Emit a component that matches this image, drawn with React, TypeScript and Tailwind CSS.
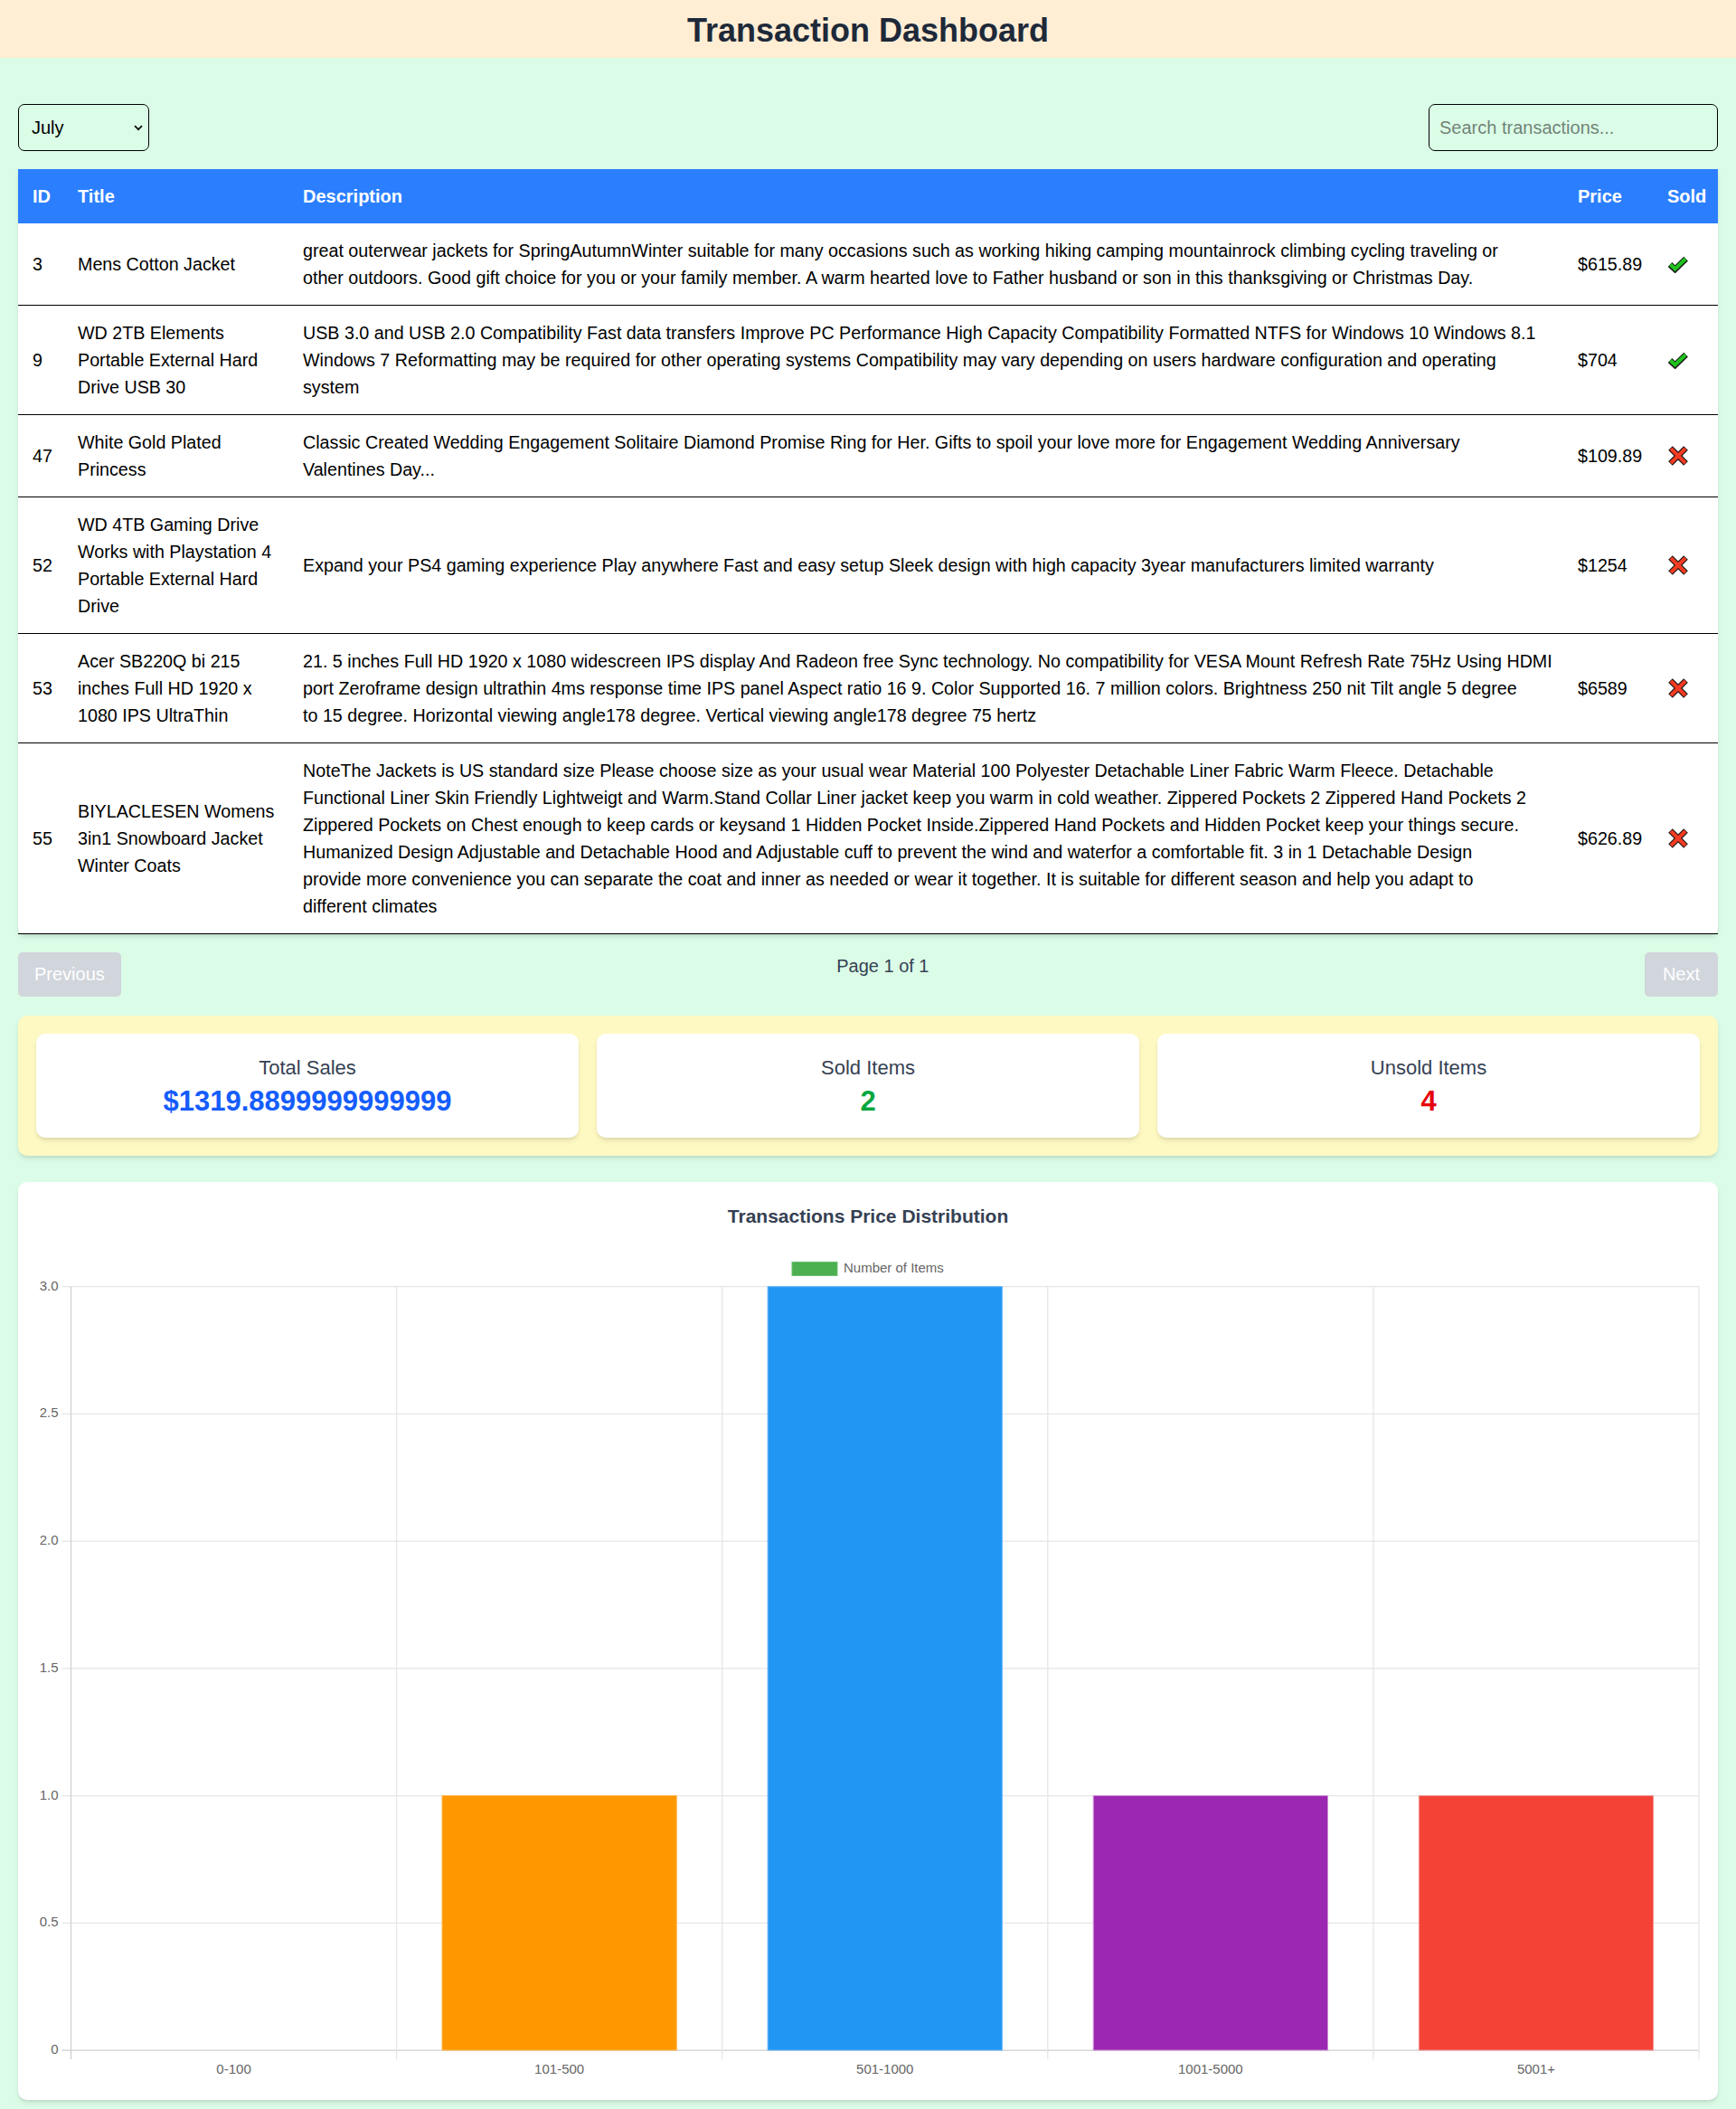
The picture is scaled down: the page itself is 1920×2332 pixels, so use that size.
import React from "react";

type Row = { id: number; title: string; lines: string[]; price: string; sold: boolean };

const rows: Row[] = [
  {
    id: 3,
    title: "Mens Cotton Jacket",
    lines: [
      "great outerwear jackets for SpringAutumnWinter suitable for many occasions such as working hiking camping mountainrock climbing cycling traveling or",
      "other outdoors. Good gift choice for you or your family member. A warm hearted love to Father husband or son in this thanksgiving or Christmas Day.",
    ],
    price: "$615.89",
    sold: true,
  },
  {
    id: 9,
    title: "WD 2TB Elements Portable External Hard Drive USB 30",
    lines: [
      "USB 3.0 and USB 2.0 Compatibility Fast data transfers Improve PC Performance High Capacity Compatibility Formatted NTFS for Windows 10 Windows 8.1",
      "Windows 7 Reformatting may be required for other operating systems Compatibility may vary depending on users hardware configuration and operating",
      "system",
    ],
    price: "$704",
    sold: true,
  },
  {
    id: 47,
    title: "White Gold Plated Princess",
    lines: [
      "Classic Created Wedding Engagement Solitaire Diamond Promise Ring for Her. Gifts to spoil your love more for Engagement Wedding Anniversary",
      "Valentines Day...",
    ],
    price: "$109.89",
    sold: false,
  },
  {
    id: 52,
    title: "WD 4TB Gaming Drive Works with Playstation 4 Portable External Hard Drive",
    lines: [
      "Expand your PS4 gaming experience Play anywhere Fast and easy setup Sleek design with high capacity 3year manufacturers limited warranty",
    ],
    price: "$1254",
    sold: false,
  },
  {
    id: 53,
    title: "Acer SB220Q bi 215 inches Full HD 1920 x 1080 IPS UltraThin",
    lines: [
      "21. 5 inches Full HD 1920 x 1080 widescreen IPS display And Radeon free Sync technology. No compatibility for VESA Mount Refresh Rate 75Hz Using HDMI",
      "port Zeroframe design ultrathin 4ms response time IPS panel Aspect ratio 16 9. Color Supported 16. 7 million colors. Brightness 250 nit Tilt angle 5 degree",
      "to 15 degree. Horizontal viewing angle178 degree. Vertical viewing angle178 degree 75 hertz",
    ],
    price: "$6589",
    sold: false,
  },
  {
    id: 55,
    title: "BIYLACLESEN Womens 3in1 Snowboard Jacket Winter Coats",
    lines: [
      "NoteThe Jackets is US standard size Please choose size as your usual wear Material 100 Polyester Detachable Liner Fabric Warm Fleece. Detachable",
      "Functional Liner Skin Friendly Lightweigt and Warm.Stand Collar Liner jacket keep you warm in cold weather. Zippered Pockets 2 Zippered Hand Pockets 2",
      "Zippered Pockets on Chest enough to keep cards or keysand 1 Hidden Pocket Inside.Zippered Hand Pockets and Hidden Pocket keep your things secure.",
      "Humanized Design Adjustable and Detachable Hood and Adjustable cuff to prevent the wind and waterfor a comfortable fit. 3 in 1 Detachable Design",
      "provide more convenience you can separate the coat and inner as needed or wear it together. It is suitable for different season and help you adapt to",
      "different climates",
    ],
    price: "$626.89",
    sold: false,
  },
];

function CheckIcon() {
  return (
    <svg width="24" height="20" viewBox="0 0 24 20" className="block">
      <polyline
        points="3,10.5 8.6,15.8 20.6,4.2"
        fill="none"
        stroke="#151515"
        strokeWidth="6.6"
        strokeLinecap="butt"
        strokeLinejoin="miter"
      />
      <polyline
        points="3.4,10.5 8.6,15.4 20.2,4.2"
        fill="none"
        stroke="#1fc21f"
        strokeWidth="4.2"
        strokeLinecap="butt"
        strokeLinejoin="miter"
      />
    </svg>
  );
}

function CrossIcon() {
  return (
    <svg width="24" height="22" viewBox="0 0 24 22" className="block">
      <g stroke="#151515" strokeWidth="6.6" strokeLinecap="butt">
        <line x1="3.5" y1="2.5" x2="20.5" y2="19.5" />
        <line x1="20.5" y1="2.5" x2="3.5" y2="19.5" />
      </g>
      <g stroke="#f23b22" strokeWidth="4.2" strokeLinecap="butt">
        <line x1="4" y1="3" x2="20" y2="19" />
        <line x1="20" y1="3" x2="4" y2="19" />
      </g>
    </svg>
  );
}

function Chart() {
  const W = 1840;
  const H = 920;
  const L = 38.5;
  const R = 1839;
  const T = 40.7;
  const B = 885;
  const catW = (R - L) / 5;
  const yOf = (v: number) => B - (v * (B - T)) / 3;
  const ticks = [0, 0.5, 1, 1.5, 2, 2.5, 3];
  const tickLabels = ["0", "0.5", "1.0", "1.5", "2.0", "2.5", "3.0"];
  const cats = ["0-100", "101-500", "501-1000", "1001-5000", "5001+"];
  const values = [0, 1, 3, 1, 1];
  const colors = ["#4caf50", "#ff9800", "#2196f3", "#9c27b0", "#f44336"];
  const borders = ["#81c784", "#ffb74d", "#64b5f6", "#ce93d8", "#ef9a9a"];
  const barW = catW * 0.72;
  const font = "'Liberation Sans', Arial, Helvetica, sans-serif";
  return (
    <svg width={W} height={H} viewBox={`0 0 ${W} ${H}`} className="block">
      <rect x={836} y={13.5} width={50} height={15} fill="#4caf50" stroke="#6cc070" strokeWidth={1} />
      <text x={893} y={21} fontSize={15} fill="#666" fontFamily={font} dominantBaseline="middle">
        Number of Items
      </text>
      {ticks.map((v, i) => (
        <line
          key={`h${i}`}
          x1={28.5}
          x2={R}
          y1={yOf(v)}
          y2={yOf(v)}
          stroke={v === 0 ? "#cfcfcf" : "#e5e5e5"}
          strokeWidth={1.25}
        />
      ))}
      {[0, 1, 2, 3, 4, 5].map((i) => (
        <line
          key={`v${i}`}
          x1={L + catW * i}
          x2={L + catW * i}
          y1={T}
          y2={B + 10}
          stroke={i === 0 ? "#cfcfcf" : "#e5e5e5"}
          strokeWidth={1.25}
        />
      ))}
      {values.map((v, i) =>
        v > 0 ? (
          <rect
            key={`b${i}`}
            x={L + catW * i + (catW - barW) / 2}
            y={yOf(v)}
            width={barW}
            height={B - yOf(v)}
            fill={colors[i]}
            stroke={borders[i]}
            strokeWidth={1}
          />
        ) : null
      )}
      {ticks.map((v, i) => (
        <text
          key={`yl${i}`}
          x={24.5}
          y={yOf(v)}
          fontSize={15}
          fill="#666"
          fontFamily={font}
          textAnchor="end"
          dominantBaseline="middle"
        >
          {tickLabels[i]}
        </text>
      ))}
      {cats.map((c, i) => (
        <text
          key={`xl${i}`}
          x={L + catW * i + catW / 2}
          y={907}
          fontSize={15}
          fill="#666"
          fontFamily={font}
          textAnchor="middle"
          dominantBaseline="middle"
        >
          {c}
        </text>
      ))}
    </svg>
  );
}

const months = [
  "January",
  "February",
  "March",
  "April",
  "May",
  "June",
  "July",
  "August",
  "September",
  "October",
  "November",
  "December",
];

function StatCard({ label, value, color }: { label: string; value: string; color: string }) {
  return (
    <div className="bg-white rounded-[10px] shadow-md p-[20px] text-center">
      <h3 className="text-gray-700 text-[22px] leading-[35px]">{label}</h3>
      <p className={`text-[31px] leading-[40px] font-bold ${color}`}>{value}</p>
    </div>
  );
}

export default function App() {
  return (
    <div className="min-h-screen bg-green-100 font-['Liberation_Sans',Arial,sans-serif] text-black text-[20px] leading-[30px]">
      <header className="bg-orange-100 pt-[14px] pb-[10px] text-center">
        <h1 className="text-[36px] leading-[40px] font-bold text-gray-800">Transaction Dashboard</h1>
      </header>

      <main className="px-[20px] pt-[51px] pb-[10px]">
        <div className="flex items-center justify-between mb-[20px]">
          <div className="relative">
            <select
              defaultValue="July"
              className="appearance-none w-[145px] h-[52px] border border-black rounded-[7px] bg-transparent pl-[14px] pr-[30px] text-[20px] leading-[30px] text-black"
            >
              {months.map((m) => (
                <option key={m} value={m}>
                  {m}
                </option>
              ))}
            </select>
            <svg
              width="10"
              height="7"
              viewBox="0 0 10 7"
              className="pointer-events-none absolute left-[128px] top-[23px]"
            >
              <path d="M1 1.2 L5 5.2 L9 1.2" fill="none" stroke="#111" strokeWidth="1.8" />
            </svg>
          </div>
          <input
            type="text"
            placeholder="Search transactions..."
            className="w-[320px] h-[52px] border border-black rounded-[7px] bg-transparent px-[11px] text-[20px] leading-[30px]"
          />
        </div>

        <div className="bg-white shadow-md rounded-b-[6px]">
          <table className="w-full table-fixed border-collapse text-left">
            <colgroup>
              <col className="w-[50px]" />
              <col className="w-[249px]" />
              <col />
              <col className="w-[99px]" />
              <col className="w-[72px]" />
            </colgroup>
            <thead>
              <tr className="bg-blue-500 text-white">
                <th className="px-[16px] py-[15px] font-bold">ID</th>
                <th className="px-[16px] py-[15px] font-bold">Title</th>
                <th className="px-[16px] py-[15px] font-bold">Description</th>
                <th className="px-[16px] py-[15px] font-bold">Price</th>
                <th className="px-[16px] py-[15px] font-bold">Sold</th>
              </tr>
            </thead>
            <tbody className="text-[19.7px]">
              {rows.map((r) => (
                <tr key={r.id} className="border-b border-black">
                  <td className="px-[16px] py-[15px] align-middle">{r.id}</td>
                  <td className="pl-[16px] pr-[12px] py-[15px] align-middle">{r.title}</td>
                  <td className="px-[16px] py-[15px] align-middle">
                    {r.lines.map((l, i) => (
                      <span key={i} className="block whitespace-nowrap">
                        {l}{" "}
                      </span>
                    ))}
                  </td>
                  <td className="px-[16px] py-[15px] align-middle">{r.price}</td>
                  <td className="pl-[16px] pr-[8px] py-[15px] align-middle">
                    {r.sold ? <CheckIcon /> : <CrossIcon />}
                  </td>
                </tr>
              ))}
            </tbody>
          </table>
        </div>

        <div className="mt-[20px] flex justify-between">
          <button className="bg-gray-300 text-white px-[18px] py-[10px] rounded-[5px] leading-[29px]">Previous</button>
          <span className="text-gray-700">Page 1 of 1</span>
          <button className="bg-gray-300 text-white px-[20px] py-[10px] rounded-[5px] leading-[29px]">Next</button>
        </div>

        <div className="mt-[21px] bg-yellow-100 p-[20px] rounded-[10px] shadow-md grid grid-cols-3 gap-[20px]">
          <StatCard label="Total Sales" value="$1319.8899999999999" color="text-blue-600" />
          <StatCard label="Sold Items" value="2" color="text-green-600" />
          <StatCard label="Unsold Items" value="4" color="text-red-600" />
        </div>

        <div className="mt-[29px] bg-white rounded-[10px] shadow-md p-[20px]">
          <h2 className="text-[21px] leading-[35px] font-semibold text-gray-700 text-center mb-[20px]">
            Transactions Price Distribution
          </h2>
          <Chart />
        </div>
      </main>
    </div>
  );
}
